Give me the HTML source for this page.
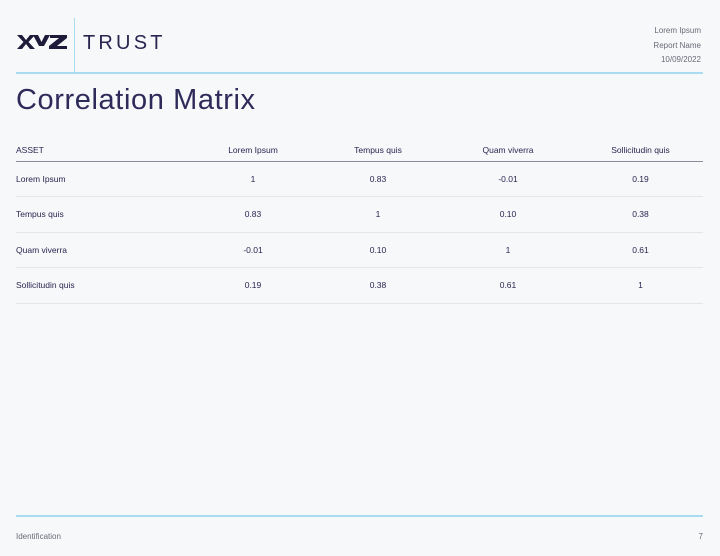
<!DOCTYPE html>
<html><head><style>
*{margin:0;padding:0;box-sizing:border-box}
body{width:720px;height:556px;background:#f7f8fa;font-family:"Liberation Sans",sans-serif;color:#2a2550;position:relative;overflow:hidden}
.a{position:absolute}
.r{font-size:8px;color:#6a6a78;text-align:right;right:19px;width:100px;line-height:14.5px}
table{position:absolute;left:16px;top:139px;width:687px;border-collapse:collapse;font-size:8.5px;color:#2a2550;table-layout:fixed}
td{height:35.5px;border-bottom:1px solid #e4e5ea;text-align:center}
td:first-child{text-align:left}
tr.h td{height:22px;border-bottom:1px solid #8a8aa0}
</style></head><body>
<svg class="a" style="left:17px;top:35px" width="50" height="14" viewBox="0 0 50 14">
<g fill="#1e1b3a">
<polygon points="0,0 5,0 9,5 13,0 18,0 11.5,7 18,14 13,14 9,9 5,14 0,14 6.5,7"/>
<polygon points="16,0 21,0 24.5,7 28,0 33,0 27,11 22,11"/>
<polygon points="33,0 50,0 50,3 40,11 50,11 50,14 32,14 32,11 42,3 33,3"/>
</g></svg>
<div class="a" style="left:74px;top:18px;width:1px;height:55px;background:#a9dcf0"></div>
<div class="a" style="left:83px;top:32px;font-size:20px;letter-spacing:3.2px;color:#2a2550">TRUST</div>
<div class="a" style="left:16px;top:72px;width:687px;height:1.5px;background:#a9dcf0"></div>
<div class="a r" style="top:24px">Lorem Ipsum</div>
<div class="a r" style="top:38.5px">Report Name</div>
<div class="a r" style="top:53px">10/09/2022</div>
<div class="a" style="left:16px;top:84px;font-size:29px;letter-spacing:0.6px;color:#2e2a5a">Correlation Matrix</div>
<table>
<colgroup><col style="width:172px"><col style="width:130px"><col style="width:120px"><col style="width:140px"><col style="width:125px"></colgroup>
<tr class="h"><td>ASSET</td><td>Lorem Ipsum</td><td>Tempus quis</td><td>Quam viverra</td><td>Sollicitudin quis</td></tr>
<tr><td>Lorem Ipsum</td><td>1</td><td>0.83</td><td>-0.01</td><td>0.19</td></tr>
<tr><td>Tempus quis</td><td>0.83</td><td>1</td><td>0.10</td><td>0.38</td></tr>
<tr><td>Quam viverra</td><td>-0.01</td><td>0.10</td><td>1</td><td>0.61</td></tr>
<tr><td>Sollicitudin quis</td><td>0.19</td><td>0.38</td><td>0.61</td><td>1</td></tr>
</table>
<div class="a" style="left:16px;top:515px;width:687px;height:1.5px;background:#a9dcf0"></div>
<div class="a" style="left:16px;top:532px;font-size:8px;color:#6a6a78">Identification</div>
<div class="a" style="right:17px;top:532px;font-size:8px;color:#6a6a78">7</div>
</body></html>
